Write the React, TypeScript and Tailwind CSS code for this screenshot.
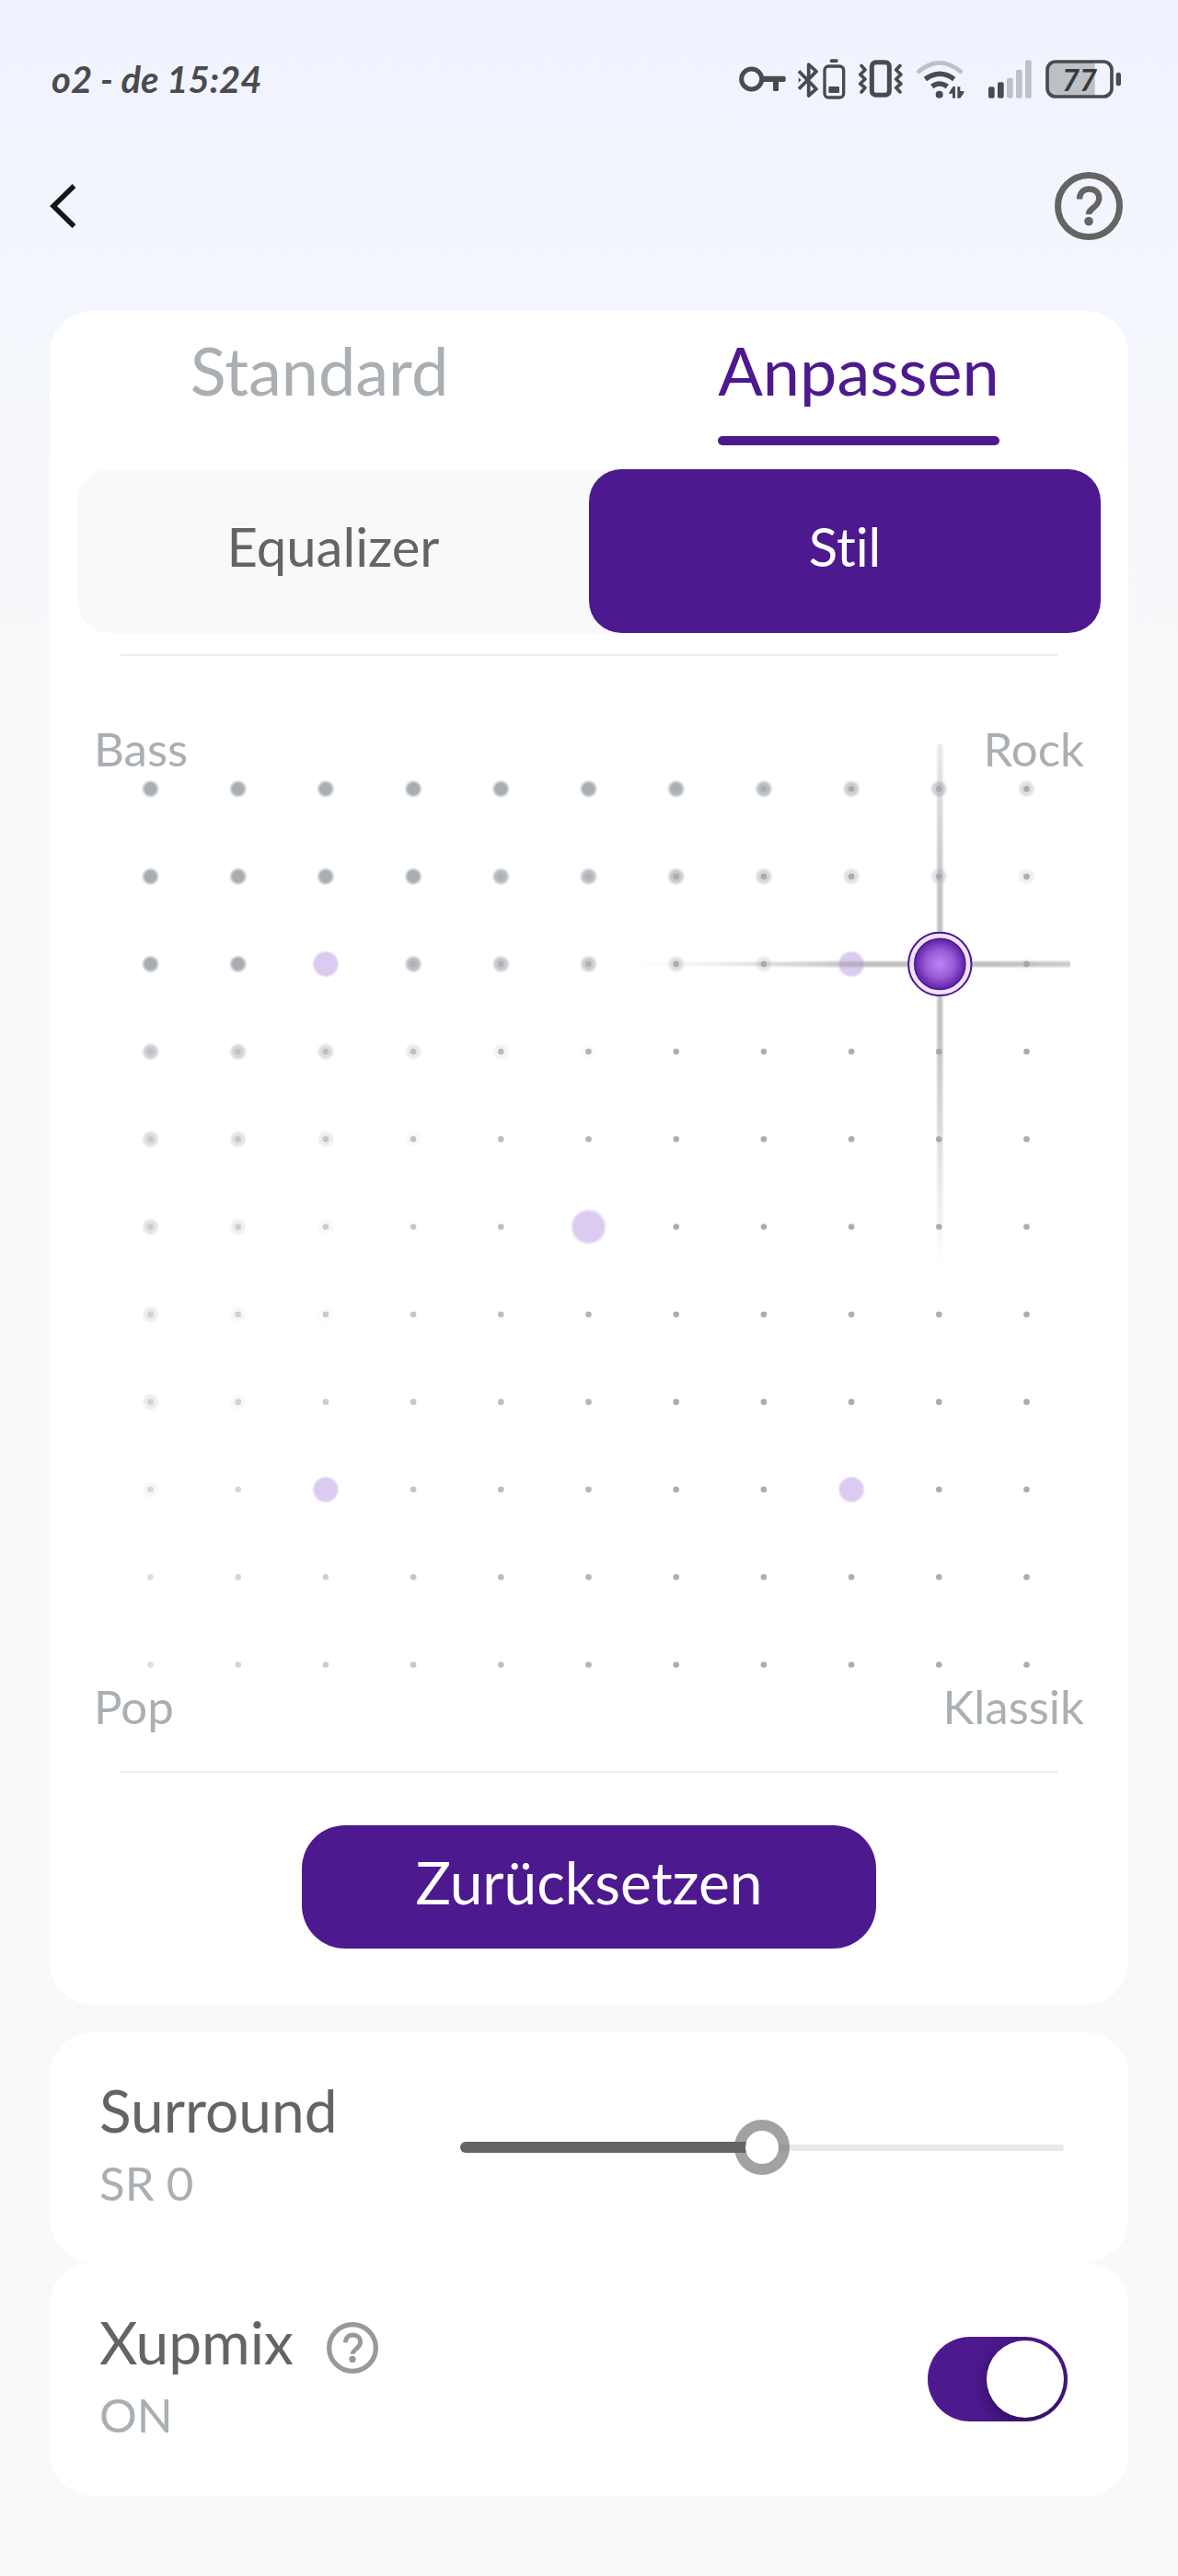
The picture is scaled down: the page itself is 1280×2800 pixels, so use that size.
import type React from "react";
import { useState } from "react";
import clsx from "clsx";

const GRID = 11;
const STEP = 95.2;
const ORIGIN_X = 109.5;
const ORIGIN_Y = 15.5;
const REACH = 330;

// strength of the soft halo around every dot, row by row
const HALO: number[][] = [
  [1, 1, 1, 1, 1, 1, 0.95, 0.8, 0.6, 0.55, 0.4],
  [1, 1, 1, 1, 0.85, 0.8, 0.65, 0.5, 0.38, 0.35, 0.2],
  [1, 1, 0, 0.8, 0.65, 0.6, 0.38, 0.28, 0, 0, 0.05],
  [0.6, 0.5, 0.4, 0.25, 0.15, 0.05],
  [0.42, 0.35, 0.22, 0.08],
  [0.35, 0.22, 0.08],
  [0.24, 0.1, 0.05],
  [0.22, 0.1],
  [0.1],
];

const DOT_OPACITY = [0.42, 0.5, 0.6, 0.7, 0.8, 0.9, 1, 1, 1, 1, 1];

const PRESETS = [
  { col: 2, row: 2, r: 15 },
  { col: 8, row: 2, r: 15 },
  { col: 5, row: 5, r: 20 },
  { col: 2, row: 8, r: 15 },
  { col: 8, row: 8, r: 15 },
];

const cx = (col: number) => ORIGIN_X + col * STEP;
const cy = (row: number) => ORIGIN_Y + row * STEP;

const HelpIcon: React.FC<{ className?: string }> = ({ className }) => (
  <svg viewBox="0 0 74 74" fill="none" className={className} aria-hidden="true">
    <circle cx="37" cy="37" r="33.5" stroke="currentColor" strokeWidth="7" />
    <path
      d="M27 29.5C27 22.5 31 18.5 37.5 18.5C44 18.5 48.3 22.3 48.3 28.3C48.3 32 46.8 34.5 43.5 37.5C39.5 41 37 42.5 37 46"
      stroke="currentColor"
      strokeWidth="6.4"
    />
    <circle cx="37" cy="53.5" r="4.8" fill="currentColor" />
  </svg>
);

const StatusIcons: React.FC = () => (
  <div className="flex items-center gap-[13px] text-[#4a4b4e]">
    {/* vpn key */}
    <svg viewBox="0 0 156 144" className="h-12 w-[52px]" fill="none">
      <circle cx="44" cy="72" r="33" stroke="currentColor" strokeWidth="15" />
      <path d="M78 62H150Q155 62 155 67V76Q155 81 150 81H132V107Q132 111 128 111H118Q114 111 114 107V81H78Z" fill="currentColor" />
    </svg>

    {/* bluetooth with headset battery */}
    <svg viewBox="0 0 156 144" className="h-12 w-[52px]" fill="none" stroke="currentColor">
      <path d="M3 46L60 104L35 126V24L60 47L3 104" strokeWidth="11" strokeLinejoin="round" />
      <path d="M2 67L11 75L2 83Z" fill="currentColor" stroke="none" />
      <rect x="87" y="30" width="62" height="102" rx="13" strokeWidth="10" />
      <rect x="104" y="7" width="27" height="11" rx="5" fill="currentColor" stroke="none" />
      <rect x="100" y="96" width="35" height="21" rx="3" fill="currentColor" stroke="none" />
    </svg>

    {/* vibrate */}
    <svg viewBox="0 0 150 144" className="h-12 w-[50px]" fill="none" stroke="currentColor">
      <rect x="46" y="17" width="57" height="107" rx="13" strokeWidth="15" />
      <path d="M12 28L24 42L8 57L24 72L8 87L24 100L12 114" strokeWidth="11" strokeLinecap="round" strokeLinejoin="round" />
      <path d="M138 28L125 42L141 57L125 72L141 87L125 100L138 114" strokeWidth="11" strokeLinecap="round" strokeLinejoin="round" />
    </svg>

    {/* wifi */}
    <svg viewBox="0 0 159 144" className="h-12 w-[53px]" fill="none" strokeLinecap="round">
      <path d="M10 47Q78 -9 146 47" stroke="#bec0c8" strokeWidth="14" />
      <path d="M31 72Q78 38 125 72" stroke="currentColor" strokeWidth="16" strokeLinecap="butt" />
      <path d="M53 96Q78 78 103 96" stroke="currentColor" strokeWidth="16" strokeLinecap="butt" />
      <circle cx="77" cy="122" r="12" fill="currentColor" />
      <path d="M108 117L121 97Q128 93 129 99V134H120V119H108Z" fill="currentColor" />
      <path d="M136 97H145V111H157V117L145 134H136Z" fill="currentColor" />
    </svg>

    {/* signal */}
    <svg viewBox="0 0 147 144" className="ml-3 h-12 w-[49px]">
      <rect x="3" y="97" width="20" height="37" rx="6" fill="currentColor" />
      <rect x="33" y="82" width="20" height="52" rx="6" fill="currentColor" />
      <rect x="63" y="68" width="20" height="66" rx="6" fill="#bec0c8" />
      <rect x="93" y="41" width="20" height="93" rx="6" fill="#bec0c8" />
      <rect x="123" y="10" width="20" height="124" rx="6" fill="#bec0c8" />
    </svg>

    {/* battery */}
    <svg viewBox="0 0 252 144" className="h-12 w-[84px]" fill="none">
      <path d="M164 16V128H36Q10 128 10 102V42Q10 16 36 16Z" fill="#bec0c8" />
      <rect x="9" y="15" width="210" height="114" rx="27" stroke="currentColor" strokeWidth="11" />
      <rect x="233" y="50" width="16" height="44" rx="8" fill="currentColor" />
      <text x="114" y="110" textAnchor="middle" fill="#38393c" className="font-['Lato'] text-[98px] font-bold italic">
        77
      </text>
    </svg>
  </div>
);

interface StylePadProps {
  col: number;
  row: number;
  onChange: (col: number, row: number) => void;
}

const StylePad: React.FC<StylePadProps> = ({ col, row, onChange }) => {
  const x = cx(col) + 1;
  const y = cy(row);
  const cells = Array.from({ length: GRID * GRID }, (_, i) => ({
    c: i % GRID,
    r: Math.floor(i / GRID),
  }));

  // the hair lines stop at the border of the pad
  const left = Math.max(x - REACH, 62);
  const right = Math.min(x + REACH, 1109);
  const top = Math.max(y - REACH, -33);
  const bottom = Math.min(y + REACH, 1016);

  return (
    <svg viewBox="0 0 1172 985" className="block w-full overflow-visible" role="img" aria-label="Stil">
      <defs>
        <radialGradient id="halo">
          <stop offset="0.6" stopColor="#a9aeb3" />
          <stop offset="1" stopColor="#a9aeb3" stopOpacity="0" />
        </radialGradient>
        <radialGradient id="preset">
          <stop offset="0.8" stopColor="#dccbf0" />
          <stop offset="1" stopColor="#dccbf0" stopOpacity="0" />
        </radialGradient>
        <radialGradient id="knob">
          <stop offset="0.1" stopColor="#b87df0" />
          <stop offset="0.55" stopColor="#9a5bd6" />
          <stop offset="1" stopColor="#5d22a3" />
        </radialGradient>
        <linearGradient id="lineX" gradientUnits="userSpaceOnUse" x1={x - REACH} y1="0" x2={x + REACH} y2="0">
          <stop offset="0" stopColor="#a0a4aa" stopOpacity="0" />
          <stop offset="0.38" stopColor="#a0a4aa" stopOpacity="0.7" />
          <stop offset="0.6" stopColor="#a0a4aa" stopOpacity="0.7" />
          <stop offset="1" stopColor="#a0a4aa" stopOpacity="0.2" />
        </linearGradient>
        <linearGradient id="lineY" gradientUnits="userSpaceOnUse" x1="0" y1={y - REACH} x2="0" y2={y + REACH}>
          <stop offset="0" stopColor="#a0a4aa" stopOpacity="0" />
          <stop offset="0.38" stopColor="#a0a4aa" stopOpacity="0.68" />
          <stop offset="0.62" stopColor="#a0a4aa" stopOpacity="0.68" />
          <stop offset="1" stopColor="#a0a4aa" stopOpacity="0" />
        </linearGradient>
        <filter id="softX" filterUnits="userSpaceOnUse" x={left} y={y - 12} width={right - left} height="24">
          <feGaussianBlur stdDeviation="0 1.3" />
        </filter>
        <filter id="softY" filterUnits="userSpaceOnUse" x={x - 12} y={top} width="24" height={bottom - top}>
          <feGaussianBlur stdDeviation="1.3 0" />
        </filter>
      </defs>

      {cells.map(({ c, r }) => {
        if (PRESETS.some((p) => p.col === c && p.row === r)) return null;
        const halo = HALO[r]?.[c] ?? 0;
        return (
          <g key={`${c}-${r}`}>
            {halo > 0 && <circle cx={cx(c)} cy={cy(r)} r="10" fill="url(#halo)" opacity={halo} />}
            <circle cx={cx(c)} cy={cy(r)} r="3.3" fill="#a9aeb3" opacity={DOT_OPACITY[c]} />
          </g>
        );
      })}

      {PRESETS.map((p) => (
        <circle key={`${p.col}-${p.row}`} cx={cx(p.col)} cy={cy(p.row)} r={p.r} fill="url(#preset)" />
      ))}

      <polygon
        points={`${left},${y - 1} ${x - 110},${y - 3} ${right},${y - 3} ${right},${y + 3} ${x - 110},${y + 3} ${left},${y + 1}`}
        fill="url(#lineX)"
        filter="url(#softX)"
      />
      <rect x={x - 3} y={top} width="6" height={bottom - top} fill="url(#lineY)" filter="url(#softY)" />

      <circle cx={x} cy={y} r="34.2" fill="#eee2fb" stroke="#4c198f" strokeWidth="2" />
      <circle cx={x} cy={y} r="27.6" fill="url(#knob)" stroke="#4c198f" strokeWidth="1.5" />

      {cells.map(({ c, r }) => (
        <rect
          key={`hit-${c}-${r}`}
          x={cx(c) - 40}
          y={cy(r) - 40}
          width="80"
          height="80"
          fill="transparent"
          onClick={() => onChange(c, r)}
        />
      ))}
    </svg>
  );
};

const App: React.FC = () => {
  const [tab, setTab] = useState("Anpassen");
  const [mode, setMode] = useState("Stil");
  const [point, setPoint] = useState({ col: 9, row: 2 });
  const [surround, setSurround] = useState(0);
  const [xupmix, setXupmix] = useState(true);

  const handleReset = () => {
    setPoint({ col: 5, row: 5 });
    setSurround(0);
  };

  return (
    <div className="min-h-screen bg-[#f9f9f9] bg-[linear-gradient(to_bottom,#f0f2ff_0px,#f3f6fd_280px,#f9f9f9_860px)] pt-[62px] pb-[87px] font-['Lato','Open_Sans',sans-serif] [font-variant-ligatures:none]">
      <div className="flex h-12 items-center justify-between pr-[61px] pl-14">
        <span className="text-[40px] leading-12 font-bold text-[#4a4b4e] italic">o2 - de 15:24</span>
        <StatusIcons />
      </div>

      <header className="mt-[77px] flex items-center justify-between pr-[60px] pl-[54px]">
        <button type="button" aria-label="Zurück">
          <svg viewBox="0 0 30 50" className="h-[50px] w-[30px]" fill="none">
            <path d="M26.500 3L4 25L26.500 47" stroke="#161616" strokeWidth="5.500" />
          </svg>
        </button>
        <button type="button" aria-label="Hilfe">
          <HelpIcon className="size-[74px] text-[#646464]" />
        </button>
      </header>

      <main className="mt-[77px] px-[54px]">
        <section className="rounded-[47px] bg-white pb-[61px]">
          <div role="tablist" className="grid grid-cols-2 pt-6">
            {["Standard", "Anpassen"].map((name) => (
              <div key={name} className="flex justify-center">
                <button
                  type="button"
                  role="tab"
                  aria-selected={tab === name}
                  onClick={() => setTab(name)}
                  className={clsx("text-[72px] leading-20", tab === name ? "text-[#4c198f]" : "text-[#aaafb3]")}
                >
                  {name}
                  <span className={clsx("mt-8 block h-2.5 rounded-full", tab === name && "bg-[#4c198f]")} />
                </button>
              </div>
            ))}
          </div>

          <div className="mx-[30px] mt-[26px] grid grid-cols-2 rounded-[35px] bg-[#f9f9f9]">
            {["Equalizer", "Stil"].map((name) => (
              <button
                key={name}
                type="button"
                aria-pressed={mode === name}
                onClick={() => setMode(name)}
                className={clsx(
                  "h-[178px] rounded-[35px] pb-3 text-[58px]",
                  mode === name ? "bg-[#4c198f] text-white" : "text-[#646464]"
                )}
              >
                {name}
              </button>
            ))}
          </div>

          <hr className="mx-[77px] mt-[23px] h-0.5 border-0 bg-[#ececec]" />

          <div className="mt-[73px] flex justify-between px-12 text-[51px] leading-14 text-[#aaafb3]">
            <span>Bass</span>
            <span>Rock</span>
          </div>
          <StylePad col={point.col} row={point.row} onChange={(col, row) => setPoint({ col, row })} />
          <div className="flex justify-between px-12 text-[51px] leading-14 text-[#aaafb3]">
            <span>Pop</span>
            <span>Klassik</span>
          </div>

          <hr className="mx-[77px] mt-[42px] h-0.5 border-0 bg-[#ececec]" />

          <button
            type="button"
            onClick={handleReset}
            className="mx-auto mt-[57px] block h-[134px] w-[624px] max-w-full rounded-[47px] bg-[#4c198f] pb-2.5 text-[64px] text-white"
          >
            Zurücksetzen
          </button>
        </section>

        <section className="mt-[30px] flex items-center rounded-[47px] bg-white pt-[50px] pr-[70px] pb-[54px] pl-[54px]">
          <label htmlFor="surround" className="w-[392px] shrink-0">
            <span className="block text-[64px] leading-[70px] text-[#646464]">Surround</span>
            <span className="mt-3 block text-[51px] leading-16 text-[#aaafb3]">SR {surround}</span>
          </label>
          <div className="relative mt-1 flex h-[60px] flex-1 items-center">
            <div className="h-[7px] w-full rounded-full bg-[#e8e8e8]" />
            <div
              className="absolute left-0 h-3 rounded-full bg-[#646464]"
              style={{ width: `${((surround + 10) / 20) * 100}%` }}
            />
            <input
              id="surround"
              type="range"
              min={-10}
              max={10}
              value={surround}
              onChange={(e) => setSurround(Number(e.target.value))}
              className="absolute inset-0 h-full w-full cursor-pointer appearance-none bg-transparent [&::-webkit-slider-thumb]:size-[60px] [&::-webkit-slider-thumb]:appearance-none [&::-webkit-slider-thumb]:rounded-full [&::-webkit-slider-thumb]:border-12 [&::-webkit-slider-thumb]:border-[#646464]/60 [&::-webkit-slider-thumb]:bg-white [&::-webkit-slider-thumb]:bg-clip-padding"
            />
          </div>
        </section>

        <section className="flex items-center justify-between rounded-[47px] bg-white pt-[52px] pr-[66px] pb-14 pl-[54px]">
          <div>
            <div className="flex h-[70px] items-center gap-9">
              <label htmlFor="xupmix" className="text-[64px] leading-[70px] text-[#646464]">
                Xupmix
              </label>
              <button type="button" aria-label="Hilfe zu Xupmix" className="pt-3">
                <HelpIcon className="size-14 text-[#999999]" />
              </button>
            </div>
            <div className="mt-3 text-[51px] leading-16 text-[#aaafb3]">{xupmix ? "ON" : "OFF"}</div>
          </div>
          <input
            id="xupmix"
            type="checkbox"
            role="switch"
            checked={xupmix}
            onChange={(e) => setXupmix(e.target.checked)}
            className="mt-1 flex h-[92px] w-[152px] cursor-pointer appearance-none items-center overflow-hidden rounded-full bg-[#cccccc] px-1 before:size-[84px] before:rounded-full before:bg-white before:shadow-[0_6px_18px_rgba(0,0,0,0.4)] checked:justify-end checked:bg-[#4c198f]"
          />
        </section>
      </main>
    </div>
  );
};

export default App;
